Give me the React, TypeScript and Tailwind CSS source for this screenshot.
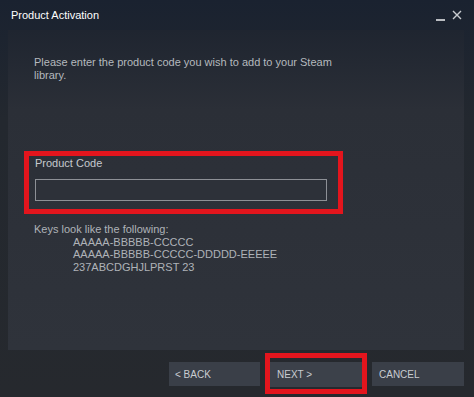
export default function App() {
    const keys = ["AAAAA-BBBBB-CCCCC", "AAAAA-BBBBB-CCCCC-DDDDD-EEEEE", "237ABCDGHJLPRST 23"]

    return (
        <div
            className="w-[474px] h-[397px] flex flex-col overflow-hidden bg-gradient-to-b from-[#1a2230] via-[#23282f] via-[30%] to-[#26292e] text-[11px] leading-[13px]"
            style={{ fontFamily: '"Liberation Sans", Arial, sans-serif' }}
        >
            {/* title bar */}
            <div className="h-[30px] shrink-0 flex items-center justify-between pl-[11px] pr-[12px]">
                <span className="text-white">Product Activation</span>
                <div className="flex items-center gap-[7px] text-[#c9ccd1]">
                    <span className="mt-[9px] block w-[9px] h-[2px] bg-[#b9bcc1]" />
                    <svg width="10" height="10" viewBox="0 0 10 10">
                        <path d="M1 1 L9 9 M9 1 L1 9" stroke="#c9ccd1" strokeWidth="1.4" />
                    </svg>
                </div>
            </div>

            {/* body panel */}
            <div className="ml-[8px] w-[456px] h-[320px] shrink-0 bg-gradient-to-b from-[#1f2530] via-[#2b2f37] via-[25%] to-[#2f333b] pt-[26px] pl-[16px]">
                <p className="pl-[10px] w-[320px] text-[#b5b9be]">
                    Please enter the product code you wish to add to your Steam library.
                </p>

                <div className="mt-[69px] w-[319px] h-[63px] border-[5px] border-[#e3151d] pt-[1px] pl-[6px]">
                    <div className="text-[#c6c9ce]">Product Code</div>
                    <div className="mt-[9px] w-[292px] h-[22px] border border-[#8d9096] bg-[#2d3139]" />
                </div>

                <div className="mt-[9px] pl-[10px] text-[#afb3b8] leading-[12.7px]">
                    <div>Keys look like the following:</div>
                    <div className="pl-[39px]">
                        {keys.map(k => (
                            <div key={k}>{k}</div>
                        ))}
                    </div>
                </div>
            </div>

            {/* footer */}
            <div className="flex-1 flex justify-end items-start pt-[12px] pr-[10px] gap-[10px] text-[10px]">
                <button className="w-[91px] h-[24px] bg-[#3a3f48] text-[#c9ccd1] text-left pl-[6px]">
                    &lt; BACK
                </button>
                <div className="relative">
                    <button className="w-[92px] h-[25px] bg-[#3c414a] text-[#c9ccd1] text-left pl-[7px]">
                        NEXT &gt;
                    </button>
                    <div className="absolute -top-[9px] -bottom-[7px] -left-[5px] -right-[5px] border-[5px] border-[#e3151d]" />
                </div>
                <button className="w-[92px] h-[24px] bg-[#3a3f48] text-[#c9ccd1] text-left pl-[7px]">
                    CANCEL
                </button>
            </div>
        </div>
    )
}
